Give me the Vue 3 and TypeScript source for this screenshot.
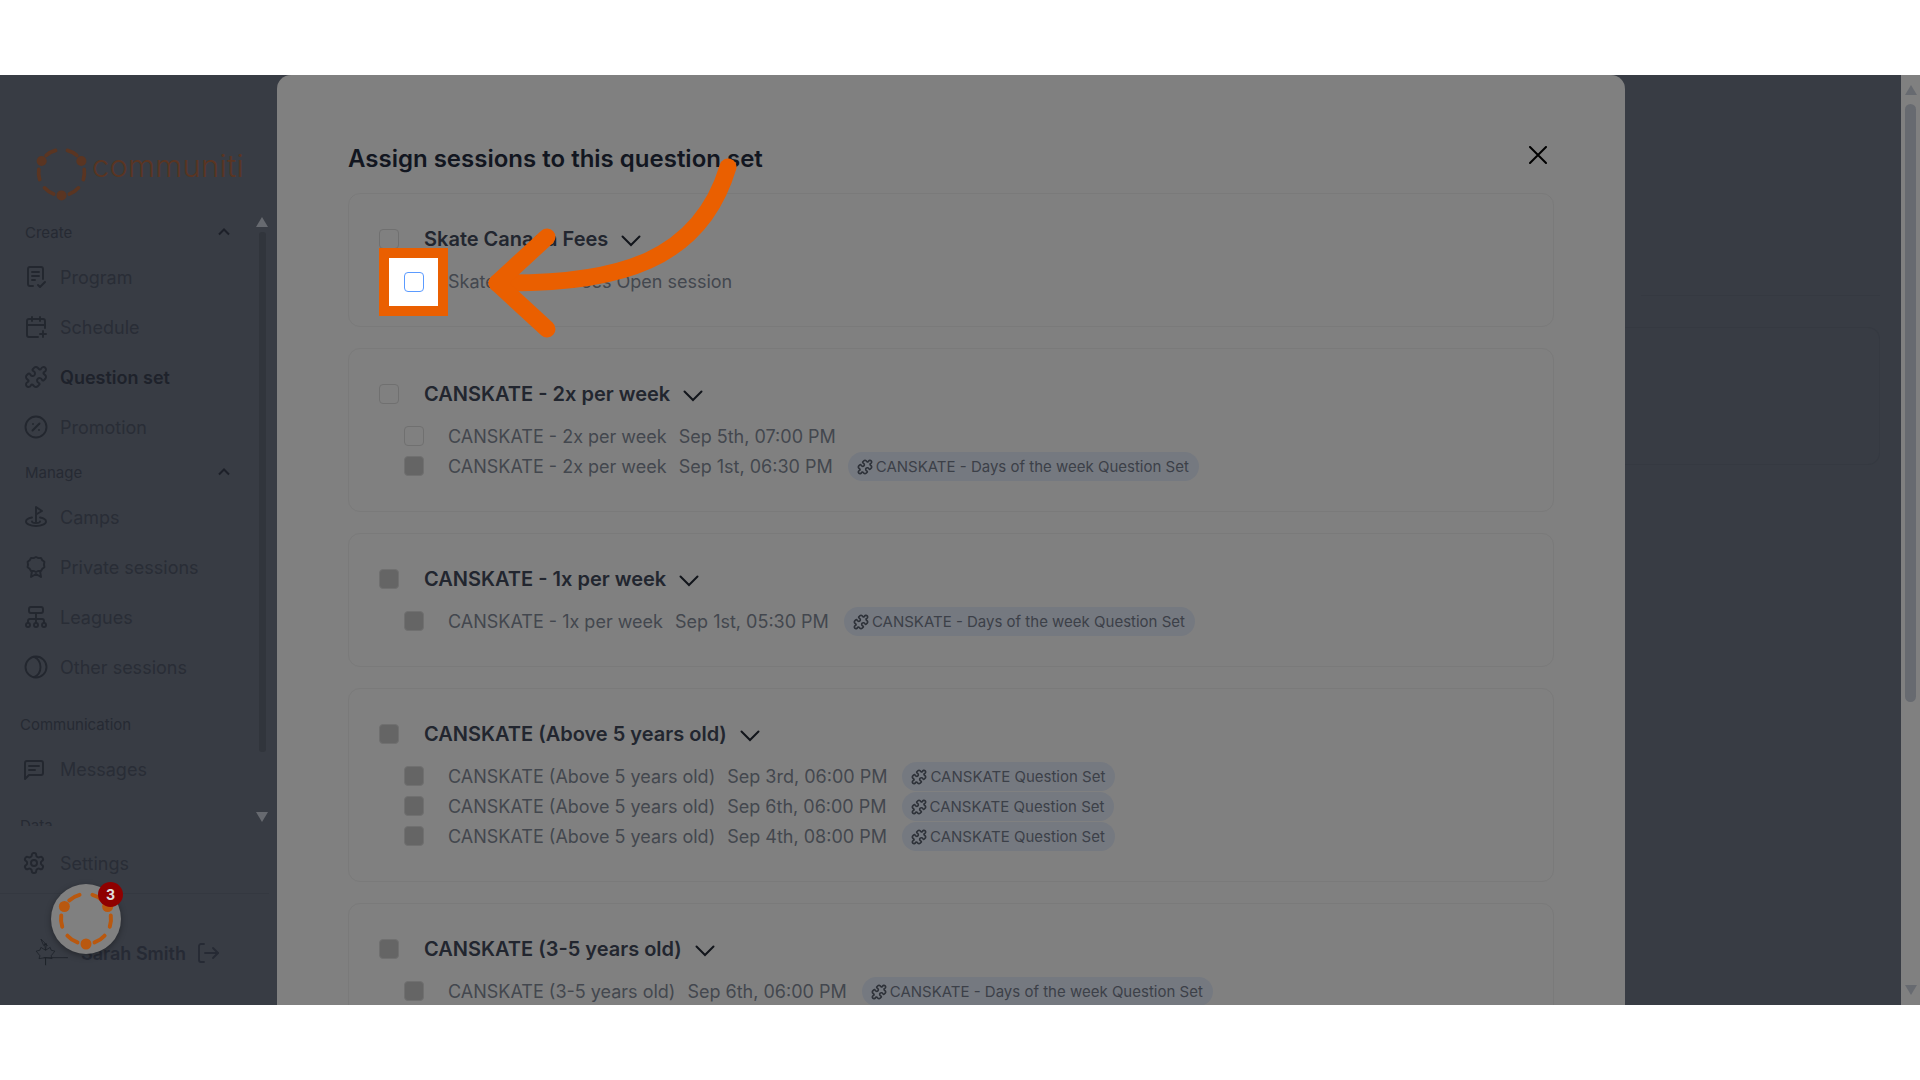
<script setup lang="ts">
interface NavItem {
  label: string
  icon: string[]
  active?: boolean
}

interface Session {
  name: string
  date?: string
  chip?: string
  checked?: boolean
}

interface SessionGroup {
  title: string
  checked?: boolean
  sessions: Session[]
}

const circle = (cx: number, cy: number, r: number) =>
  `M${cx} ${cy - r}a${r} ${r} 0 1 0 0 ${r * 2}a${r} ${r} 0 1 0 0 ${-r * 2}`

const puzzle =
  'M19.439 7.85c-.049.322.059.648.289.878l1.568 1.568c.47.47.706 1.087.706 1.704s-.235 1.233-.706 1.704l-1.611 1.611a.98.98 0 0 1-.837.276c-.47-.07-.802-.48-.968-.925a2.501 2.501 0 1 0-3.214 3.214c.446.166.855.497.925.968a.979.979 0 0 1-.276.837l-1.61 1.61a2.404 2.404 0 0 1-1.705.707 2.402 2.402 0 0 1-1.704-.706l-1.568-1.568a1.026 1.026 0 0 0-.877-.29c-.493.074-.84.504-1.02.968a2.5 2.5 0 1 1-3.237-3.237c.464-.18.894-.527.967-1.02a1.026 1.026 0 0 0-.289-.877l-1.568-1.568A2.402 2.402 0 0 1 1.998 12c0-.617.236-1.234.706-1.704L4.23 8.77c.24-.24.581-.353.917-.303.515.077.877.528 1.073 1.01a2.5 2.5 0 1 0 3.259-3.259c-.482-.196-.933-.558-1.01-1.073-.05-.336.062-.676.303-.917l1.525-1.525A2.402 2.402 0 0 1 12 1.998c.617 0 1.234.236 1.704.706l1.568 1.568c.23.23.556.338.877.29.493-.074.84-.504 1.02-.968a2.5 2.5 0 1 1 3.237 3.237c-.464.18-.894.527-.967 1.02Z'

const gear =
  'M12.22 2h-.44a2 2 0 0 0-2 2v.18a2 2 0 0 1-1 1.73l-.43.25a2 2 0 0 1-2 0l-.15-.08a2 2 0 0 0-2.73.73l-.22.38a2 2 0 0 0 .73 2.73l.15.1a2 2 0 0 1 1 1.72v.51a2 2 0 0 1-1 1.74l-.15.09a2 2 0 0 0-.73 2.73l.22.38a2 2 0 0 0 2.73.73l.15-.08a2 2 0 0 1 2 0l.43.25a2 2 0 0 1 1 1.73V20a2 2 0 0 0 2 2h.44a2 2 0 0 0 2-2v-.18a2 2 0 0 1 1-1.73l.43-.25a2 2 0 0 1 2 0l.15.08a2 2 0 0 0 2.73-.73l.22-.39a2 2 0 0 0-.73-2.73l-.15-.08a2 2 0 0 1-1-1.74v-.5a2 2 0 0 1 1-1.74l.15-.09a2 2 0 0 0 .73-2.73l-.22-.38a2 2 0 0 0-2.73-.73l-.15.08a2 2 0 0 1-2 0l-.43-.25a2 2 0 0 1-1-1.73V4a2 2 0 0 0-2-2z'

const createItems: NavItem[] = [
  {
    label: 'Program',
    icon: ['M9 21H6a2 2 0 0 1-2-2V4a2 2 0 0 1 2-2h11a2 2 0 0 1 2 2v10', 'M8 7h7', 'M8 11h7', 'M8 15h3', 'M14 20l2 2 5-5']
  },
  {
    label: 'Schedule',
    icon: ['M21 13V6a2 2 0 0 0-2-2H5a2 2 0 0 0-2 2v14a2 2 0 0 0 2 2h9', 'M16 2v4', 'M8 2v4', 'M3 10h18', 'M19 16v6', 'M16 19h6']
  },
  { label: 'Question set', icon: [puzzle], active: true },
  {
    label: 'Promotion',
    icon: [circle(12, 12, 10.5), 'M15.5 8.5l-7 7', 'M9 9h.01', 'M15 15h.01']
  }
]

const manageItems: NavItem[] = [
  {
    label: 'Camps',
    icon: [
      'M12 17V2l6 4-6 3.5',
      'M8 12.5c-3.6.7-6 2.2-6 4 0 2.500 4.500 4.500 10 4.500s10-2 10-4.500c0-1.800-2.400-3.300-6-4',
      'M8 16.500c0 1 1.800 1.500 4 1.500s4-.5 4-1.500'
    ]
  },
  {
    label: 'Private sessions',
    icon: ['M12 2l2.400 1.100 2.600-.1 1.300 2.300 2.100 1.500-.4 2.700.4 2.700-2.100 1.500L17 16l-2.600-.1L12 17l-2.400-1.100L7 16l-1.300-2.300-2.100-1.500.4-2.700-.4-2.700 2.100-1.500L7 3l2.600.1z', 'M8 16l-1 6 5-3 5 3-1-6']
  },
  {
    label: 'Leagues',
    icon: ['M7 2h10a2 2 0 0 1 2 2v2a2 2 0 0 1-2 2H7a2 2 0 0 1-2-2V4a2 2 0 0 1 2-2z', 'M12 8v10', 'M4 18v-2a2 2 0 0 1 2-2h12a2 2 0 0 1 2 2v2', circle(4, 20, 2), circle(12, 20, 2), circle(20, 20, 2)]
  },
  {
    label: 'Other sessions',
    icon: [circle(12, 12, 10.5), 'M10 1.800C14 3.500 16.500 7.500 16.500 12s-2.500 8.500-6.500 10.200']
  }
]

const messageItems: NavItem[] = [
  {
    label: 'Messages',
    icon: ['M21 16a2 2 0 0 1-2 2H7l-4 4V6a2 2 0 0 1 2-2h14a2 2 0 0 1 2 2z', 'M7 9h10', 'M7 13h6']
  }
]

const daysChip = 'CANSKATE - Days of the week Question Set'
const canskateChip = 'CANSKATE Question Set'

const groups: SessionGroup[] = [
  {
    title: 'Skate Canada Fees',
    sessions: [{ name: 'Skate Canada Fees Open session' }]
  },
  {
    title: 'CANSKATE - 2x per week',
    sessions: [
      { name: 'CANSKATE - 2x per week', date: 'Sep 5th, 07:00 PM' },
      { name: 'CANSKATE - 2x per week', date: 'Sep 1st, 06:30 PM', chip: daysChip, checked: true }
    ]
  },
  {
    title: 'CANSKATE - 1x per week',
    checked: true,
    sessions: [{ name: 'CANSKATE - 1x per week', date: 'Sep 1st, 05:30 PM', chip: daysChip, checked: true }]
  },
  {
    title: 'CANSKATE (Above 5 years old)',
    checked: true,
    sessions: [
      { name: 'CANSKATE (Above 5 years old)', date: 'Sep 3rd, 06:00 PM', chip: canskateChip, checked: true },
      { name: 'CANSKATE (Above 5 years old)', date: 'Sep 6th, 06:00 PM', chip: canskateChip, checked: true },
      { name: 'CANSKATE (Above 5 years old)', date: 'Sep 4th, 08:00 PM', chip: canskateChip, checked: true }
    ]
  },
  {
    title: 'CANSKATE (3-5 years old)',
    checked: true,
    sessions: [{ name: 'CANSKATE (3-5 years old)', date: 'Sep 6th, 06:00 PM', chip: daysChip, checked: true }]
  }
]

// the ring logo: six dashes and three dots
const ringDashes =
  'M36.47 5.85A25 25 0 0 1 46.73 11.42M23.53 5.85A25 25 0 0 0 13.27 11.42M54.76 26.52A25 25 0 0 1 53.78 37.73M5.24 26.52A25 25 0 0 0 6.22 37.73M48.58 46.73A25 25 0 0 1 38.55 53.49M11.42 46.73A25 25 0 0 0 21.45 53.49'
</script>

<template>
  <div class="stage">
    <aside class="sidebar">
      <div class="brand">
        <svg class="brand-ring" viewBox="0 0 60 60" fill="#5a3522">
          <path :d="ringDashes" fill="none" stroke="#5a3522" stroke-width="4" stroke-linecap="round" />
          <circle cx="8.35" cy="17.5" r="5.5" />
          <circle cx="51.65" cy="17.5" r="5.5" />
          <circle cx="30" cy="55" r="5.5" />
        </svg>
        <span class="brand-name">communiti</span>
      </div>

      <div class="nav-scroll">
        <div class="nav-head">
          <span>Create</span>
          <svg class="nav-chevron" viewBox="0 0 14 8"><path d="M2 6.500l5-5 5 5" /></svg>
        </div>
        <div v-for="item in createItems" :key="item.label" class="nav-item" :class="{ active: item.active }">
          <svg class="nav-icon" viewBox="0 0 24 24"><path v-for="d in item.icon" :key="d" :d="d" /></svg>
          {{ item.label }}
        </div>

        <div class="nav-head manage">
          <span>Manage</span>
          <svg class="nav-chevron" viewBox="0 0 14 8"><path d="M2 6.500l5-5 5 5" /></svg>
        </div>
        <div v-for="item in manageItems" :key="item.label" class="nav-item">
          <svg class="nav-icon" viewBox="0 0 24 24"><path v-for="d in item.icon" :key="d" :d="d" /></svg>
          {{ item.label }}
        </div>

        <div class="nav-head plain">Communication</div>
        <div v-for="item in messageItems" :key="item.label" class="nav-item flush">
          <svg class="nav-icon" viewBox="0 0 24 24"><path v-for="d in item.icon" :key="d" :d="d" /></svg>
          {{ item.label }}
        </div>
        <div class="nav-head plain data">Data</div>
      </div>

      <div class="side-scroll">
        <i class="tri up"></i>
        <i class="side-thumb"></i>
        <i class="tri down"></i>
      </div>

      <div class="nav-item flush settings">
        <svg class="nav-icon" viewBox="0 0 24 24">
          <path :d="gear" />
          <circle cx="12" cy="12" r="3" />
        </svg>
        Settings
      </div>

      <div class="user">
        <svg class="user-leaf" viewBox="0 0 60 34">
          <path d="M17 2l3 7 3-2-1 7 5-3 1 3 4 1-4 5 1 3-7-1v8-8l-7 1 1-3-4-5 4-1 1-3 5 3-1-7 3 2z" />
          <path d="M20 22h26" />
        </svg>
        <span class="user-name">Sarah Smith</span>
        <svg class="user-logout" viewBox="0 0 24 24">
          <path d="M8 3H5a2 2 0 0 0-2 2v14a2 2 0 0 0 2 2h3" />
          <path d="M9 12h13" />
          <path d="M17 7l5 5-5 5" />
        </svg>
      </div>
    </aside>

    <section class="modal">
      <div class="modal-head">
        <h2>Assign sessions to this question set</h2>
        <svg class="modal-close" viewBox="0 0 18 18"><path d="M1 1l16 16M17 1L1 17" /></svg>
      </div>

      <div v-for="group in groups" :key="group.title" class="group">
        <div class="group-head">
          <span class="box" :class="{ checked: group.checked }"></span>
          <span class="group-title">{{ group.title }}</span>
          <svg class="group-chevron" viewBox="0 0 20 12"><path d="M1.500 1.500L10 10l8.500-8.500" /></svg>
        </div>
        <div v-for="(s, i) in group.sessions" :key="i" class="session">
          <span class="box" :class="{ checked: s.checked }"></span>
          <span class="session-name">{{ s.name }}</span>
          <span v-if="s.date" class="session-date">{{ s.date }}</span>
          <span v-if="s.chip" class="chip">
            <svg class="chip-icon" viewBox="0 0 24 24"><path :d="puzzle" /></svg>
            {{ s.chip }}
          </span>
        </div>
      </div>
    </section>

    <div class="behind">
      <div class="behind-line"></div>
      <div class="behind-card"></div>
    </div>

    <div class="page-scroll">
      <i class="tri up"></i>
      <i class="page-thumb"></i>
      <i class="tri down"></i>
    </div>

    <!-- guide overlay: highlighted checkbox, arrow, help bubble -->
    <div class="spot"><span class="spot-box"></span></div>

    <svg class="arrow" viewBox="0 0 260 200">
      <path d="M248 17C220 110 140 135 17 133" />
      <path d="M67 87L17 133l50 46" />
    </svg>

    <div class="bubble">
      <svg class="bubble-ring" viewBox="0 0 60 60" fill="#b9580f">
        <path :d="ringDashes" fill="none" stroke="#b9580f" stroke-width="4" stroke-linecap="round" />
        <circle cx="8.35" cy="17.5" r="5.5" />
        <circle cx="51.65" cy="17.5" r="5.5" />
        <circle cx="30" cy="55" r="5.5" />
      </svg>
      <span class="bubble-badge">3</span>
    </div>
  </div>
</template>

<style scoped>
.stage {
  position: relative;
  display: flex;
  height: 930px;
  margin-top: 75px;
  overflow: hidden;
  background: #383c44;
  font-family: Inter, 'Liberation Sans', sans-serif;
}

.sidebar {
  position: relative;
  flex: 0 0 277px;
  padding-top: 69px;
  box-sizing: border-box;
}

.brand {
  display: flex;
  align-items: center;
  height: 56px;
  padding-left: 34px;
}

.brand-ring {
  width: 55px;
  height: 55px;
  overflow: visible;
}

.brand-name {
  margin: -14px 0 0 3px;
  font-size: 31px;
  font-weight: 300;
  letter-spacing: 0.2px;
  color: #5a3522;
}

.nav-scroll {
  height: 606px;
  margin-top: 20px;
  overflow: hidden;
}

.nav-head {
  display: flex;
  align-items: center;
  justify-content: space-between;
  height: 24px;
  padding: 0 46px 0 25px;
  margin-bottom: 8px;
  font-size: 15px;
  color: #262a33;
}

.nav-head.manage {
  margin-top: 8px;
}

.nav-head.plain {
  padding-left: 20px;
  margin-top: 20px;
}

.nav-head.data {
  margin-top: 19px;
}

.nav-chevron {
  width: 14px;
  height: 8px;
  fill: none;
  stroke: #1d2029;
  stroke-width: 2;
}

.nav-item {
  display: flex;
  align-items: center;
  gap: 12px;
  height: 50px;
  padding-left: 24px;
  font-size: 18px;
  color: #292d36;
}

.nav-item.flush {
  padding-left: 22px;
  gap: 14px;
}

.nav-item.active {
  font-weight: 600;
  color: #1e222b;
}

.nav-icon {
  flex: none;
  width: 24px;
  height: 24px;
  fill: none;
  stroke: #23272f;
  stroke-width: 1.9;
  stroke-linecap: round;
  stroke-linejoin: round;
}

.settings {
  margin-top: 12px;
  padding-bottom: 5px;
  border-bottom: 1px solid #343840;
  margin-right: 8px;
}

.user {
  display: flex;
  align-items: center;
  margin-top: 42px;
  padding-left: 25px;
}

.user-leaf {
  width: 56px;
  height: 34px;
  fill: none;
  stroke: #1e222a;
  stroke-width: 0.9;
}

.user-name {
  font-size: 18px;
  font-weight: 600;
  color: #262a34;
}

.user-logout {
  width: 24px;
  height: 24px;
  margin-left: 10px;
  fill: none;
  stroke: #262a34;
  stroke-width: 1.8;
  stroke-linecap: round;
  stroke-linejoin: round;
}

.side-scroll {
  position: absolute;
  top: 142px;
  left: 258px;
  display: flex;
  flex-direction: column;
  align-items: center;
  width: 8px;
  height: 605px;
}

.side-thumb {
  width: 7px;
  height: 520px;
  margin-top: 5px;
  background: #31353c;
  border-radius: 3px;
}

.side-scroll .tri {
  border-left-width: 4px;
  border-right-width: 4px;
  border-bottom-color: #31353c;
  border-top-color: #31353c;
}

.side-scroll .tri.down {
  margin-top: auto;
}

.modal {
  flex: 0 0 1348px;
  box-sizing: border-box;
  height: 930px;
  padding: 67px 71px 0;
  overflow: hidden;
  background: #808080;
  border-radius: 14px 14px 0 0;
}

.modal-head {
  display: flex;
  align-items: center;
  justify-content: space-between;
  height: 32px;
  margin-bottom: 19px;
  padding-right: 7px;
}

.modal-head h2 {
  margin: 0;
  font-size: 24px;
  font-weight: 600;
  color: #121620;
}

.modal-close {
  width: 18px;
  height: 18px;
  margin-top: -6px;
  fill: none;
  stroke: #000;
  stroke-width: 2;
  stroke-linecap: round;
}

.group {
  box-sizing: border-box;
  padding: 33px 30px 30px;
  margin-bottom: 21px;
  margin-right: 0;
  border: 1px solid #7a7a7a;
  border-radius: 12px;
}

.group-head {
  display: flex;
  align-items: center;
  height: 24px;
  margin-bottom: 15px;
}

.group-title {
  margin-left: 25px;
  font-size: 20px;
  font-weight: 600;
  color: #22262f;
}

.group-chevron {
  width: 20px;
  height: 12px;
  margin: 3px 0 0 13px;
  fill: none;
  stroke: #12151b;
  stroke-width: 2;
  stroke-linecap: round;
}

.box {
  flex: none;
  box-sizing: border-box;
  width: 20px;
  height: 20px;
  border: 1px solid #707070;
  border-radius: 4px;
}

.box.checked {
  background: #656565;
}

.session {
  display: flex;
  align-items: center;
  height: 30px;
  padding-left: 25px;
  font-size: 18px;
  color: #43474e;
}

.session-name {
  margin-left: 24px;
}

.session-date {
  margin-left: 12px;
}

.chip {
  display: flex;
  align-items: center;
  gap: 3px;
  height: 29px;
  padding: 0 10px 0 9px;
  margin: 1px 0 0 15px;
  font-size: 15px;
  color: #3c4048;
  background: #757980;
  border-radius: 15px;
}

.chip-icon {
  width: 16px;
  height: 16px;
  fill: none;
  stroke: #2e3239;
  stroke-width: 2.4;
}

.behind {
  flex: 1;
  padding: 220px 21px 0 0;
}

.behind-line {
  height: 1px;
  margin-left: 16px;
  background: #353941;
}

.behind-card {
  box-sizing: border-box;
  height: 138px;
  margin-top: 31px;
  border: 1px solid #353941;
  border-left: 0;
  border-radius: 0 12px 12px 0;
}

.page-scroll {
  display: flex;
  flex: 0 0 19px;
  flex-direction: column;
  align-items: center;
  padding: 10px 0 10px;
  background: #808080;
}

.page-thumb {
  width: 11px;
  height: 598px;
  margin-top: 9px;
  background: #676a70;
  border-radius: 6px;
}

.page-scroll .tri.down {
  margin-top: auto;
}

.tri {
  display: block;
  width: 0;
  height: 0;
  border-style: solid;
  border-color: transparent;
}

.tri.up {
  border-width: 0 6px 10px;
  border-bottom-color: #676a70;
}

.tri.down {
  border-width: 10px 6px 0;
  border-top-color: #676a70;
}

.spot {
  position: absolute;
  top: 173px;
  left: 379px;
  display: flex;
  align-items: center;
  justify-content: center;
  box-sizing: border-box;
  width: 69px;
  height: 68px;
  background: #fff;
  border: 10px solid #ea5f00;
}

.spot-box {
  box-sizing: border-box;
  width: 20px;
  height: 20px;
  border: 1.5px solid #5b9bff;
  border-radius: 4px;
}

.arrow {
  position: absolute;
  top: 75px;
  left: 480px;
  width: 260px;
  height: 200px;
  fill: none;
  stroke: #ea5f00;
  stroke-width: 17;
  stroke-linecap: round;
  stroke-linejoin: round;
  overflow: visible;
}

.bubble {
  position: absolute;
  top: 809px;
  left: 51px;
  display: flex;
  align-items: center;
  justify-content: center;
  width: 70px;
  height: 70px;
  background: #808080;
  border-radius: 50%;
  box-shadow: 0 2px 6px rgba(0, 0, 0, 0.35);
}

.bubble-ring {
  width: 60px;
  height: 60px;
  overflow: visible;
}

.bubble-badge {
  position: absolute;
  top: -2px;
  right: -2px;
  width: 25px;
  height: 25px;
  font-size: 14px;
  font-weight: 700;
  line-height: 25px;
  text-align: center;
  color: #e0e0e0;
  background: #8f0000;
  border-radius: 50%;
}
</style>

<style>
html,
body {
  margin: 0;
  background: #fff;
}
</style>
